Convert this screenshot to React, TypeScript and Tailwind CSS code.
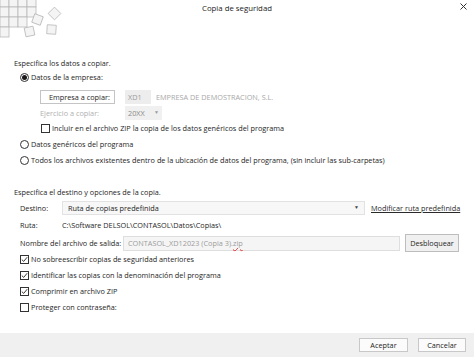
import React from "react";

const Radio = ({ checked }: { checked?: boolean }) => (
  <span className="w-[9px] h-[9px] rounded-full border border-[#333] bg-white flex items-center justify-center shrink-0">
    {checked && <span className="w-[5px] h-[5px] rounded-full bg-[#1a1a1a]" />}
  </span>
);

const Check = ({ checked }: { checked?: boolean }) => (
  <span className="w-[9px] h-[9px] border border-[#333] bg-white flex items-center justify-center shrink-0">
    {checked && (
      <svg width="7" height="7" viewBox="0 0 7 7">
        <path d="M0.8 3.6 L2.7 5.4 L6.2 1.2" fill="none" stroke="#222" strokeWidth="0.9" />
      </svg>
    )}
  </span>
);

const Logo = () => (
  <svg width="64" height="40" viewBox="0 0 64 40" className="absolute left-0 top-0">
    <g fill="#f4f4f4" stroke="#b8b8b8" strokeWidth="0.8">
      {[0, 9, 18, 27].map((x) => (
        <rect key={"a" + x} x={x} y={-2} width={9} height={9} />
      ))}
      {[0, 9, 18, 27].map((x) => (
        <rect key={"b" + x} x={x} y={7} width={9} height={10} />
      ))}
      {[0, 9, 18].map((x) => (
        <rect key={"c" + x} x={x} y={17} width={9} height={10} />
      ))}
      <rect x={0} y={27} width={9} height={10} />
      <rect x={33} y={15} width={9} height={9} transform="rotate(20 37.5 19.5)" />
      <rect x={50} y={9} width={9} height={9} transform="rotate(45 54.5 13.5)" />
      <rect x={25} y={27} width={9} height={9} transform="rotate(-12 29.5 31.5)" />
      <rect x={47} y={25} width={9} height={9} transform="rotate(4 51.5 29.5)" />
    </g>
  </svg>
);

const Row = ({ className, children }: { className: string; children: React.ReactNode }) => (
  <div className={"flex items-center whitespace-nowrap " + className}>{children}</div>
);

export default function App() {
  return (
    <div
      className="w-[474px] h-[357px] bg-white flex flex-col text-[7.3px] text-[#1e1e1e] overflow-hidden"
      style={{ fontFamily: "'Open Sans', 'Noto Sans', sans-serif" }}
    >
      {/* Header */}
      <div className="relative h-[55px] shrink-0">
        <Logo />
        <div className="h-[18px] flex items-center justify-center text-[7.8px] text-[#222]">Copia de seguridad</div>
        <svg width="7" height="7" viewBox="0 0 7 7" className="absolute right-[7px] top-[3px]">
          <path d="M0.5 0.5 L6.5 6.5 M6.5 0.5 L0.5 6.5" stroke="#333" strokeWidth="1" />
        </svg>
      </div>

      {/* Body */}
      <div className="flex-1 flex flex-col px-[14px]">
        <Row className="h-[16px]">Especifica los datos a copiar.</Row>
        <Row className="h-[12px] pl-[6px] gap-[2px]">
          <Radio checked />
          <span>Datos de la empresa:</span>
        </Row>
        <Row className="mt-[7px] h-[14px] pl-[26px]">
          <div className="w-[75px] h-[14px] border border-[#c4c4c4] flex items-center pl-[8px]">Empresa a copiar:</div>
          <div className="ml-[10px] w-[26px] h-[14px] bg-[#ededed] flex items-center pl-[3px] text-[#9a9a9a]">XD1</div>
          <span className="ml-[5px] text-[#a8a8a8]">EMPRESA DE DEMOSTRACION, S.L.</span>
        </Row>
        <Row className="mt-[2px] h-[14px] pl-[26px]">
          <span className="w-[85px] text-[#b0b0b0]">Ejercicio a copiar:</span>
          <div className="w-[37px] h-[14px] bg-[#f0f0f0] flex items-center justify-between px-[3px] text-[#8a8a8a]">
            <span>20XX</span>
            <span className="text-[5px] text-[#999]">▼</span>
          </div>
        </Row>
        <Row className="mt-[2px] h-[12px] pl-[27px] gap-[2px]">
          <Check />
          <span>Incluir en el archivo ZIP la copia de los datos genéricos del programa</span>
        </Row>
        <Row className="mt-[4px] h-[12px] pl-[6px] gap-[2px]">
          <Radio />
          <span>Datos genéricos del programa</span>
        </Row>
        <Row className="mt-[4px] h-[12px] pl-[6px] gap-[2px]">
          <Radio />
          <span>Todos los archivos existentes dentro de la ubicación de datos del programa, (sin incluir las sub-carpetas)</span>
        </Row>

        <Row className="mt-[20px] h-[12px]">Especifica el destino y opciones de la copia.</Row>
        <Row className="mt-[3px] h-[14px] pl-[6px]">
          <span className="w-[42px] shrink-0">Destino:</span>
          <div className="w-[303px] shrink-0 h-[14px] bg-[#f7f7f7] border border-[#e2e2e2] flex items-center justify-between pl-[5px] pr-[5px]">
            <span>Ruta de copias predefinida</span>
            <span className="text-[5px] text-[#444]">▼</span>
          </div>
          <span className="ml-[6px] underline text-[#2a2a2a]">Modificar ruta predefinida</span>
        </Row>
        <Row className="mt-[4px] h-[12px] pl-[6px]">
          <span className="w-[42px] shrink-0">Ruta:</span>
          <span>C:\Software DELSOL\CONTASOL\Datos\Copias\</span>
        </Row>
        <Row className="mt-[3px] h-[18px] pl-[6px]">
          <span className="w-[103px] shrink-0">Nombre del archivo de salida:</span>
          <div className="w-[277px] shrink-0 h-[15px] bg-[#f5f5f5] border border-[#dedede] flex items-center pl-[4px] text-[#9c9c9c]">
            <span>
              CONTASOL_XD12023 (Copia 3).
              <span className="underline decoration-wavy decoration-[#e03030] decoration-[0.6px]">zip</span>
            </span>
          </div>
          <div className="ml-[5px] w-[54px] shrink-0 h-[18px] bg-[#f0f0f0] border border-[#bdbdbd] flex items-center justify-center">
            Desbloquear
          </div>
        </Row>
        <Row className="mt-[1px] h-[12px] pl-[6px] gap-[2px]">
          <Check checked />
          <span>No sobreescribir copias de seguridad anteriores</span>
        </Row>
        <Row className="mt-[4px] h-[12px] pl-[6px] gap-[2px]">
          <Check checked />
          <span>Identificar las copias con la denominación del programa</span>
        </Row>
        <Row className="mt-[4px] h-[12px] pl-[6px] gap-[2px]">
          <Check checked />
          <span>Comprimir en archivo ZIP</span>
        </Row>
        <Row className="mt-[4px] h-[12px] pl-[6px] gap-[2px]">
          <Check />
          <span>Proteger con contraseña:</span>
        </Row>
      </div>

      {/* Footer */}
      <div className="h-[24px] shrink-0 bg-[#f0f0f0] flex items-center justify-end gap-[10px] pr-[8px]">
        <div className="w-[49px] h-[14px] bg-[#fbfbfb] border border-[#c8c8c8] flex items-center justify-center">Aceptar</div>
        <div className="w-[48px] h-[14px] bg-[#fbfbfb] border border-[#c8c8c8] flex items-center justify-center">Cancelar</div>
      </div>
    </div>
  );
}
